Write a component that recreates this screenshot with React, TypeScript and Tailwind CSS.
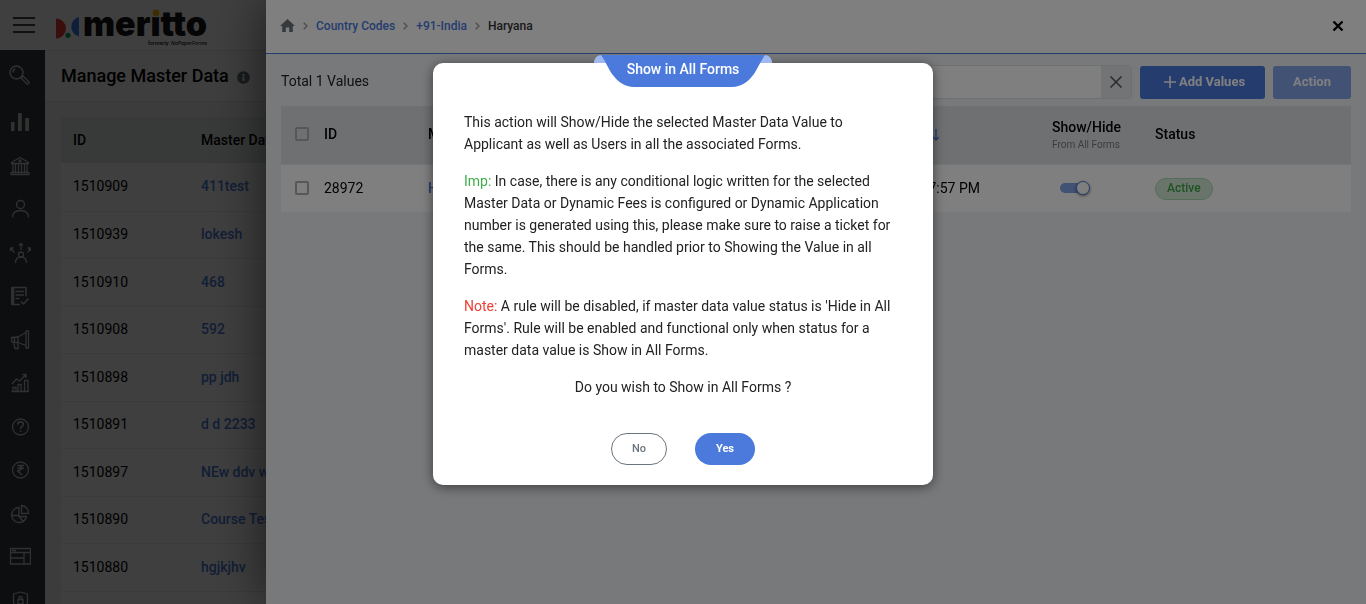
import React from "react";
import { FaInfoCircle } from "react-icons/fa";

const records = [
  ["1510909", "411test"],
  ["1510939", "lokesh"],
  ["1510910", "468"],
  ["1510908", "592"],
  ["1510898", "pp jdh"],
  ["1510891", "d d 2233"],
  ["1510897", "NEw ddv workflow"],
  ["1510890", "Course Test"],
  ["1510880", "hgjkjhv"],
  ["1510879", "hgjk"],
];

function NavIcon({ children }: { children: React.ReactNode }) {
  return (
    <svg
      viewBox="0 0 22 22"
      className="size-[22px]"
      fill="none"
      stroke="currentColor"
      strokeWidth="1.3"
      strokeLinejoin="round"
      aria-hidden="true"
    >
      {children}
    </svg>
  );
}

const navItems: { label: string; icon: React.ReactNode }[] = [
  {
    label: "Dashboards",
    icon: (
      <g fill="currentColor" stroke="none">
        <path d="M2 11h3.5v9H2zM9 2h3.8v18H9zM16.2 7H20v13h-3.8z" />
      </g>
    ),
  },
  {
    label: "Institute",
    icon: (
      <>
        <path d="M2.5 7.5 11 2.5l8.500 5v1h-17zM2 17.500h18v2H2z" />
        <path d="M4 8.500v9M6.500 8.500v9M9.500 8.500v9M12.500 8.500v9M15.500 8.500v9M18 8.500v9" />
        <circle cx="11" cy="6" r="1" />
      </>
    ),
  },
  {
    label: "Leads",
    icon: (
      <>
        <circle cx="11.500" cy="6.500" r="4" />
        <path d="M3.500 19.500c0-5 3.500-7 8-7s8 2 8 7" />
      </>
    ),
  },
  {
    label: "Allocation",
    icon: (
      <>
        <circle cx="12" cy="12.500" r="2.500" />
        <path d="M6.500 21c0-4 2-6 5.500-6s5.500 2 5.500 6M12 8V1.500M10 3.500l2-2 2 2M5.500 10.500 1.500 6M1.500 9V6h3M18.500 10.500l3-4.500M18.500 6h3v3" />
      </>
    ),
  },
  {
    label: "Applications",
    icon: (
      <path
        d="M17 11.500V2.500H4.500v17H2.800v-3M4.500 2.500H2.800V19.500H11M6.500 6.500H15M6.500 10H15M6.500 13.500h4M12 16.500l2.500 2.500 5-5.500"
        strokeWidth="1.6"
      />
    ),
  },
  {
    label: "Marketing",
    icon: (
      <path d="M2.500 8.500 9 8l8-4.500v13l-8-3-6-.5zM17 2h2.500v17H17zM9 8v5.500M5.500 8.500v5M4.500 13.500l1.500 6h3.500L8.500 14" />
    ),
  },
  {
    label: "Reports",
    icon: (
      <path d="M2.500 19.500h17.500M4 19.500v-4h3v4M9 19.500v-7h3v7M15.500 19.500V8.500h3.500v11M3 12l4.500-5 3 2 6.500-6.500M13.500 2.500H17V6" />
    ),
  },
  {
    label: "Queries",
    icon: (
      <>
        <circle cx="11.500" cy="11" r="8" />
        <path d="M8.800 8.500c0-3.500 5.600-3.500 5.600-.2 0 2-2.800 2.200-2.800 4.700M11.600 14.500v1.500" strokeWidth="1.600" />
      </>
    ),
  },
  {
    label: "Payments",
    icon: (
      <>
        <circle cx="11.500" cy="11" r="8" />
        <path d="M8.500 6.500h6.500M8.500 9.200h6.500M8.500 6.500c5.500-.3 5.500 5.300 0 5.200l4.500 4.300" strokeWidth="1.500" />
      </>
    ),
  },
  {
    label: "Analytics",
    icon: (
      <>
        <path d="M10 4.500a7.500 7.500 0 1 0 7.500 9H10zM10 13.500l5 5.500M3 12.500h7" />
        <path d="M12.500 2.500a7.500 7.500 0 0 1 7 8h-7z" />
      </>
    ),
  },
  {
    label: "Pages",
    icon: <path d="M1.500 2.500h20v15.500h-20zM1.500 6.500h20M15 6.500V18M1.500 12H15M3 4.500h4" />,
  },
  {
    label: "Security",
    icon: (
      <>
        <path d="M11.500 2 18.500 4v7c0 4-3 6.500-7 8.500-4-2-7-4.500-7-8.500V4z" />
        <path d="M9 9.500h5V14H9zM10 9.500V8c0-2 3-2 3 0v1.500" />
      </>
    ),
  },
];

function Logo() {
  return (
    <svg viewBox="0 0 160 50" className="h-[50px] w-[160px]" role="img" aria-label="meritto">
      <path d="M1 18.500a10 10 0 0 1 0 20z" fill="#e53a33" />
      <path d="M24 17a10 10 0 0 0 0 19.500z" fill="#3f78ea" />
      <circle cx="13" cy="35.300" r="2.600" fill="#0fa653" />
      <text x="28" y="36" fontFamily="Inter, sans-serif" fontWeight="900" fontSize="34" fill="#161616">
        meritto
      </text>
      <circle cx="101" cy="12.500" r="5" fill="#ffffff" />
      <circle cx="101" cy="13" r="3.400" fill="#f5b400" />
      <text x="93" y="45" fontFamily="Inter, sans-serif" fontWeight="600" fontSize="5" fill="#161616">
        formerly
      </text>
      <text x="116" y="45" fontFamily="Inter, sans-serif" fontWeight="500" fontStyle="italic" fontSize="5" fill="#161616">
        NoPaperForms
      </text>
    </svg>
  );
}

function BasePage() {
  return (
    <div className="flex h-full flex-col bg-[#f1f1f1]">
      <header className="flex h-[50px] shrink-0 items-center gap-5 bg-white pl-[13px]">
        <button type="button" aria-label="Toggle menu" className="flex w-[22px] flex-col gap-[5px]">
          <span className="h-[2px] bg-[#444]" />
          <span className="h-[2px] bg-[#444]" />
          <span className="h-[2px] bg-[#444]" />
        </button>
        <Logo />
      </header>
      <div className="flex min-h-0 flex-1">
        <nav className="flex w-[45px] shrink-0 flex-col overflow-hidden bg-[#31393f] text-[#c4c4c4]">
          <a href="#search" aria-label="Search" className="flex h-[50px] shrink-0 items-center pl-2">
            <svg viewBox="0 0 22 22" className="size-[22px]" fill="none" stroke="currentColor" strokeWidth="1.400" aria-hidden="true">
              <circle cx="8.500" cy="8.500" r="6.500" />
              <path d="M4.800 8.500a3.700 3.700 0 0 1 2.500-3.500M13 14l5.500 5.500a1.300 1.300 0 0 0 2-2L15 12z" />
            </svg>
          </a>
          {navItems.map((item) => (
            <a
              key={item.label}
              href="#nav"
              aria-label={item.label}
              className="flex shrink-0 items-center pl-[9px] odd:h-[43px] even:h-[44px]"
            >
              <NavIcon>{item.icon}</NavIcon>
            </a>
          ))}
        </nav>
        <main className="min-w-0 flex-1">
          <div className="flex h-[52px] items-center gap-2 border-y border-[#e4e4e4] bg-[#fafafa] pb-[2px] pl-4">
            <h1 className="text-[18px] font-medium">Manage Master Data</h1>
            <FaInfoCircle className="mt-1 size-[13px] text-[#66707a]" />
          </div>
          <div className="px-4 pt-[15px]">
            <table className="w-full table-fixed border-collapse bg-white text-left text-[14px]">
              <thead>
                <tr className="h-[46px] bg-[#e0e8e6]">
                  <th className="w-[128px] pl-3 font-medium">ID</th>
                  <th className="pl-3 font-medium">Master Data Name</th>
                </tr>
              </thead>
              <tbody>
                {records.map(([id, name]) => (
                  <tr key={id} className="border-b border-[#ededed] odd:h-[48px] even:h-[47px]">
                    <td className="pl-3">{id}</td>
                    <td className="pl-3">
                      <a href="#record" className="font-medium text-[#4b79dc]">
                        {name}
                      </a>
                    </td>
                  </tr>
                ))}
              </tbody>
            </table>
          </div>
        </main>
      </div>
    </div>
  );
}

function Chevron() {
  return (
    <svg viewBox="0 0 5 8" className="h-2 w-[5px]" fill="none" stroke="#999" strokeWidth="1.300" aria-hidden="true">
      <path d="M.7 .8 4 4 .7 7.200" />
    </svg>
  );
}

function Checkbox({ label }: { label: string }) {
  return (
    <input
      type="checkbox"
      aria-label={label}
      className="block size-[14px] appearance-none rounded-[2px] border-2 border-[#aaaeb2] bg-transparent"
    />
  );
}

function Drawer() {
  return (
    <aside className="ml-auto flex h-full w-[81%] max-w-[1100px] flex-col bg-[#eef2f7] shadow-[0_0_50px_rgba(0,0,0,0.6)]">
      <header className="flex h-[54px] shrink-0 items-center justify-between border-b border-[#4b79dc] bg-white pr-[22px] pb-[2px] pl-[14px]">
        <nav aria-label="Breadcrumb" className="flex items-center gap-2 text-[12px] font-medium">
          <a href="#home" aria-label="Home">
            <svg viewBox="0 0 15 13" className="h-[13px] w-[15px]" fill="#6c757d" aria-hidden="true">
              <path d="M7.500 0 15 7h-2.200v6H9.200V8.500H5.800V13H2.200V7H0z" />
            </svg>
          </a>
          <Chevron />
          <a href="#codes" className="text-[#4b79dc]">Country Codes</a>
          <Chevron />
          <a href="#india" className="text-[#4b79dc]">+91-India</a>
          <Chevron />
          <span className="text-[#333]">Haryana</span>
        </nav>
        <button type="button" aria-label="Close panel">
          <svg viewBox="0 0 12 12" className="size-3" stroke="#000" strokeWidth="2.400" aria-hidden="true">
            <path d="m1.500 1.500 9 9M10.500 1.500l-9 9" />
          </svg>
        </button>
      </header>
      <div className="px-[15px] pt-[11px]">
        <div className="mb-[7px] flex h-[34px] items-center gap-2">
          <h2 className="flex-1 pb-[2px] text-[14px] text-[#222]">Total 1 Values</h2>
          <div className="flex h-[34px] w-[320px] overflow-hidden rounded-[3px] border border-[#dcdfe3] bg-white">
            <input type="text" aria-label="Search values" className="min-w-0 flex-1 outline-none" />
            <button type="button" aria-label="Clear search" className="flex w-[30px] items-center justify-center bg-[#e6e8eb]">
              <svg viewBox="0 0 12 12" className="size-3" stroke="#555" strokeWidth="1.500" aria-hidden="true">
                <path d="m.5.5 11 11M11.500.5l-11 11" />
              </svg>
            </button>
          </div>
          <button
            type="button"
            className="flex h-[33px] w-[125px] items-center justify-center gap-[3px] rounded-[3px] bg-[#4b79dc] pl-1 text-[13px] font-bold text-white"
          >
            <svg viewBox="0 0 12 12" className="size-3" stroke="#fff" strokeWidth="1.600" aria-hidden="true">
              <path d="M6 0v12M0 6h12" />
            </svg>
            Add Values
          </button>
          <button type="button" className="h-[33px] w-[78px] rounded-[3px] bg-[#84a4e9] text-[13px] font-bold text-white">
            Action
          </button>
        </div>
        <table className="w-full table-fixed border-collapse bg-white text-left text-[14px]">
          <thead>
            <tr className="h-[58px] border-b border-[#e6e9ec] bg-[#dde1e5]">
              <th className="w-[43px] pb-[2px] pl-[14px]"><Checkbox label="Select all values" /></th>
              <th className="w-[104px] font-medium">ID</th>
              <th className="w-[370px] font-medium">Master Data Value</th>
              <th className="w-[254px] font-medium">
                <span className="flex items-center gap-1 pl-[53px]">
                  Updated On
                  <svg viewBox="0 0 8 12" className="ml-1 h-3 w-2" fill="none" stroke="#4b79dc" strokeWidth="1.300" aria-hidden="true">
                    <path d="M4 0v11M1 8l3 3 3-3" />
                  </svg>
                </span>
              </th>
              <th className="w-[103px] pt-[2px]">
                <span className="block leading-[18px] font-medium">Show/Hide</span>
                <span className="block text-[10px] leading-[18px] font-normal text-[#777]">From All Forms</span>
              </th>
              <th className="font-medium">Status</th>
            </tr>
          </thead>
          <tbody>
            <tr className="h-[48px]">
              <td className="pl-[14px]"><Checkbox label="Select Haryana" /></td>
              <td>28972</td>
              <td><a href="#value" className="font-medium text-[#4b79dc]">Haryana</a></td>
              <td className="pr-[72px] text-right">17 Feb 2023 07:57 PM</td>
              <td className="pl-2">
                <button type="button" role="switch" aria-checked="true" aria-label="Show in all forms" className="flex h-[14px] w-[30px] items-center">
                  <span className="h-[10px] w-[22px] rounded-full bg-[#84a4e9]" />
                  <span className="-ml-[6px] size-[14px] shrink-0 rounded-full border border-[#4b79dc] bg-white shadow-[0_1px_3px_rgba(0,0,0,0.5)]" />
                </button>
              </td>
              <td>
                <span className="inline-block h-[22px] rounded-full border border-[#aadbb0] bg-[#d3ead5] px-[11px] text-[12px] leading-[18px] font-medium text-[#3fa648]">
                  Active
                </span>
              </td>
            </tr>
          </tbody>
        </table>
      </div>
    </aside>
  );
}

function ConfirmDialog() {
  return (
    <section
      role="dialog"
      aria-modal="true"
      aria-labelledby="confirm-title"
      className="relative w-[500px] rounded-[10px] bg-white px-[31px] pt-12 pb-5 text-[14px] leading-[22px] text-[#222] shadow-[0_2px_12px_rgba(0,0,0,0.5)]"
    >
      <div className="absolute -top-2 left-1/2 h-8 w-[178px] -translate-x-1/2">
        <svg viewBox="0 0 178 32" className="absolute inset-0 size-full" aria-hidden="true">
          <path d="M0 8C0 3.500 3 0 8 0h162c5 0 8 3.500 8 8z" fill="#a0b8ee" />
          <path d="M7 0c5 7 7 13 11 19 6 8 13 13 22 13h98c9 0 16-5 22-13 4-6 6-12 11-19z" fill="#4b79dc" />
        </svg>
        <h2 id="confirm-title" className="relative text-center text-[14px] leading-7 font-medium text-white">
          Show in All Forms
        </h2>
      </div>
      <p className="mb-[15px]">
        This action will Show/Hide the selected Master Data Value to Applicant as well as Users in all the associated Forms.
      </p>
      <p className="mb-[15px]">
        <span className="text-[#3fae49]">Imp:</span> In case, there is any conditional logic written for the selected
        Master Data or Dynamic Fees is configured or Dynamic Application number is generated using this, please make sure
        to raise a ticket for the same. This should be handled prior to Showing the Value in all Forms.
      </p>
      <p className="mb-[15px]">
        <span className="text-[#f03e36]">Note:</span> A rule will be disabled, if master data value status is 'Hide in All
        Forms'. Rule will be enabled and functional only when status for a master data value is Show in All Forms.
      </p>
      <p className="text-center">Do you wish to Show in All Forms ?</p>
      <div className="mt-[35px] flex justify-center gap-7 text-[11px]">
        <button type="button" className="h-8 w-14 rounded-full border border-[#6c757d] font-medium text-[#6c757d]">
          No
        </button>
        <button type="button" className="h-8 w-[60px] rounded-full bg-[#4b79dc] font-bold text-white">
          Yes
        </button>
      </div>
    </section>
  );
}

export default function App() {
  return (
    <div className="relative h-screen overflow-hidden font-[Roboto,sans-serif] text-black">
      <BasePage />
      <div className="fixed inset-0 bg-black/50">
        <Drawer />
      </div>
      <div className="fixed inset-0 flex items-start justify-center overflow-hidden bg-black/50 pt-[63px]">
        <ConfirmDialog />
      </div>
    </div>
  );
}
